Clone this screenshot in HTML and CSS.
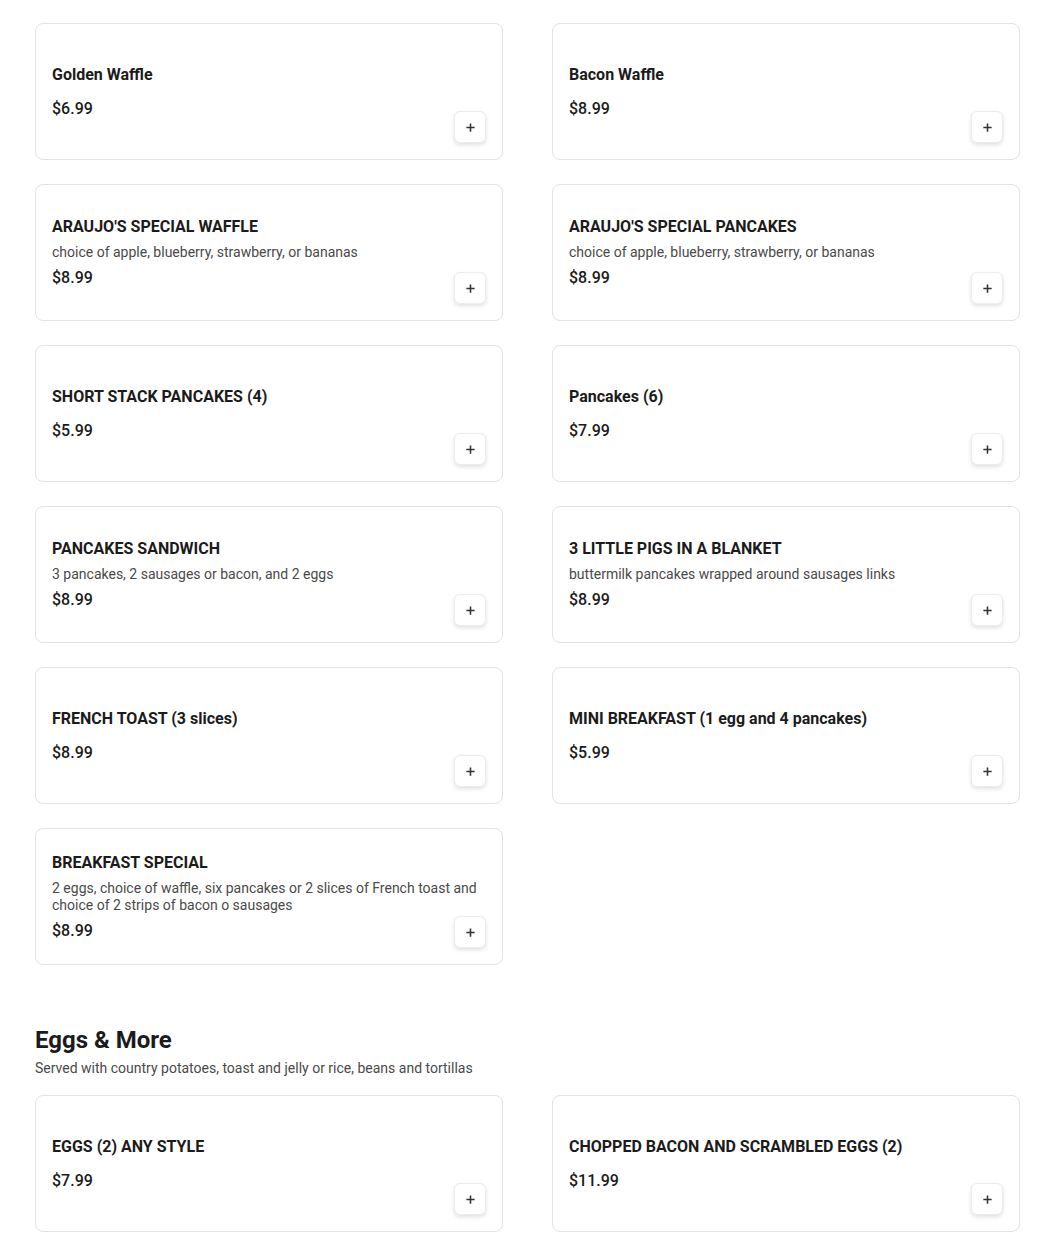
FILE: index.html
```html
<!DOCTYPE html>
<html>
<head>
<meta charset="utf-8">
<link rel="stylesheet" href="styles.css">
</head>
<body>
<main class="page">
  <section class="section">
    <div class="grid">
      <div class="card"><div class="info"><div class="title">Golden Waffle</div><div class="price">$6.99</div></div><button class="add"><svg viewBox="0 0 12 12" width="12" height="12"><path d="M6 1.5v9M1.5 6h9" stroke="#333" stroke-width="1.7" fill="none"/></svg></button></div>
      <div class="card"><div class="info"><div class="title">Bacon Waffle</div><div class="price">$8.99</div></div><button class="add"><svg viewBox="0 0 12 12" width="12" height="12"><path d="M6 1.5v9M1.5 6h9" stroke="#333" stroke-width="1.7" fill="none"/></svg></button></div>
      <div class="card"><div class="info"><div class="title">ARAUJO'S SPECIAL WAFFLE</div><div class="desc">choice of apple, blueberry, strawberry, or bananas</div><div class="price">$8.99</div></div><button class="add"><svg viewBox="0 0 12 12" width="12" height="12"><path d="M6 1.5v9M1.5 6h9" stroke="#333" stroke-width="1.7" fill="none"/></svg></button></div>
      <div class="card"><div class="info"><div class="title">ARAUJO'S SPECIAL PANCAKES</div><div class="desc">choice of apple, blueberry, strawberry, or bananas</div><div class="price">$8.99</div></div><button class="add"><svg viewBox="0 0 12 12" width="12" height="12"><path d="M6 1.5v9M1.5 6h9" stroke="#333" stroke-width="1.7" fill="none"/></svg></button></div>
      <div class="card"><div class="info"><div class="title">SHORT STACK PANCAKES (4)</div><div class="price">$5.99</div></div><button class="add"><svg viewBox="0 0 12 12" width="12" height="12"><path d="M6 1.5v9M1.5 6h9" stroke="#333" stroke-width="1.7" fill="none"/></svg></button></div>
      <div class="card"><div class="info"><div class="title">Pancakes (6)</div><div class="price">$7.99</div></div><button class="add"><svg viewBox="0 0 12 12" width="12" height="12"><path d="M6 1.5v9M1.5 6h9" stroke="#333" stroke-width="1.7" fill="none"/></svg></button></div>
      <div class="card"><div class="info"><div class="title">PANCAKES SANDWICH</div><div class="desc">3 pancakes, 2 sausages or bacon, and 2 eggs</div><div class="price">$8.99</div></div><button class="add"><svg viewBox="0 0 12 12" width="12" height="12"><path d="M6 1.5v9M1.5 6h9" stroke="#333" stroke-width="1.7" fill="none"/></svg></button></div>
      <div class="card"><div class="info"><div class="title">3 LITTLE PIGS IN A BLANKET</div><div class="desc">buttermilk pancakes wrapped around sausages links</div><div class="price">$8.99</div></div><button class="add"><svg viewBox="0 0 12 12" width="12" height="12"><path d="M6 1.5v9M1.5 6h9" stroke="#333" stroke-width="1.7" fill="none"/></svg></button></div>
      <div class="card"><div class="info"><div class="title">FRENCH TOAST (3 slices)</div><div class="price">$8.99</div></div><button class="add"><svg viewBox="0 0 12 12" width="12" height="12"><path d="M6 1.5v9M1.5 6h9" stroke="#333" stroke-width="1.7" fill="none"/></svg></button></div>
      <div class="card"><div class="info"><div class="title">MINI BREAKFAST (1 egg and 4 pancakes)</div><div class="price">$5.99</div></div><button class="add"><svg viewBox="0 0 12 12" width="12" height="12"><path d="M6 1.5v9M1.5 6h9" stroke="#333" stroke-width="1.7" fill="none"/></svg></button></div>
      <div class="card"><div class="info"><div class="title">BREAKFAST SPECIAL</div><div class="desc">2 eggs, choice of waffle, six pancakes or 2 slices of French toast and choice of 2 strips of bacon o sausages</div><div class="price">$8.99</div></div><button class="add"><svg viewBox="0 0 12 12" width="12" height="12"><path d="M6 1.5v9M1.5 6h9" stroke="#333" stroke-width="1.7" fill="none"/></svg></button></div>
    </div>
  </section>
  <section class="section">
    <h2 class="section-title">Eggs &amp; More</h2>
    <p class="section-sub">Served with country potatoes, toast and jelly or rice, beans and tortillas</p>
    <div class="grid">
      <div class="card"><div class="info"><div class="title">EGGS (2) ANY STYLE</div><div class="price">$7.99</div></div><button class="add"><svg viewBox="0 0 12 12" width="12" height="12"><path d="M6 1.5v9M1.5 6h9" stroke="#333" stroke-width="1.7" fill="none"/></svg></button></div>
      <div class="card"><div class="info"><div class="title">CHOPPED BACON AND SCRAMBLED EGGS (2)</div><div class="price">$11.99</div></div><button class="add"><svg viewBox="0 0 12 12" width="12" height="12"><path d="M6 1.5v9M1.5 6h9" stroke="#333" stroke-width="1.7" fill="none"/></svg></button></div>
    </div>
  </section>
</main>
</body>
</html>
```

FILE: styles.css
```css
* { box-sizing: border-box; }
html, body { margin: 0; padding: 0; background: #fff; }
body {
  font-family: Roboto, "Liberation Sans", Arial, sans-serif;
  color: #1b1b1b;
}
.page {
  width: 985px;
  margin-left: 35px;
  padding-top: 23px;
}
.section + .section { margin-top: 59px; }
.grid {
  display: grid;
  grid-template-columns: 468px 468px;
  column-gap: 49px;
  row-gap: 24px;
}
.card {
  height: 137px;
  border: 1px solid #e3e3e3;
  border-radius: 8px;
  padding: 16px;
  display: grid;
  grid-template-columns: 1fr;
  grid-template-rows: 1fr;
  background: #fff;
}
.info {
  grid-area: 1 / 1;
  align-self: center;
  min-width: 0;
}
.title {
  font-size: 16px;
  line-height: 24px;
  font-weight: 700;
  color: #1b1b1b;
}
.desc {
  margin-top: 5px;
  font-size: 14px;
  line-height: 17px;
  color: #4a4a4a;
}
.price {
  margin-top: 10px;
  font-size: 16px;
  line-height: 24px;
  font-weight: 500;
  color: #1b1b1b;
}
.desc + .price { margin-top: 5px; }
.add {
  grid-area: 1 / 1;
  justify-self: end;
  align-self: end;
  width: 32px;
  height: 32px;
  padding: 0;
  border: 1px solid #ececec;
  border-radius: 6px;
  background: #fff;
  box-shadow: 0 2px 4px rgba(0,0,0,0.12);
  display: flex;
  align-items: center;
  justify-content: center;
}
.add svg { display: block; width: 11px; height: 11px; }
.section-title {
  margin: 0;
  font-size: 24px;
  line-height: 32px;
  font-weight: 700;
  color: #1b1b1b;
}
.section-sub {
  margin: 2px 0 17px;
  font-size: 14px;
  line-height: 20px;
  color: #4a4a4a;
}
```
